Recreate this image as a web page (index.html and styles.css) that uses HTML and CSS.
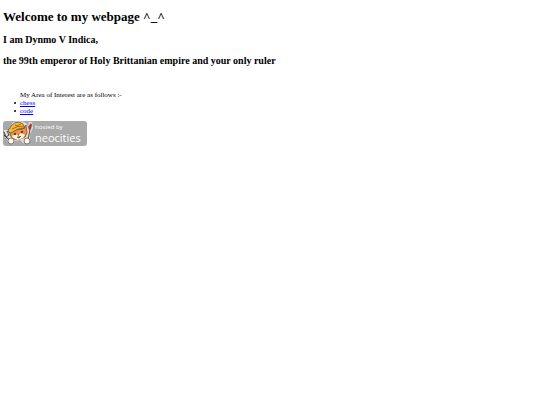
FILE: index.html
```html
<!DOCTYPE html>
<html lang="en">
<head>
<meta charset="utf-8">
<title>Welcome to my webpage</title>
<link rel="stylesheet" href="styles.css">
</head>
<body>
<h1>Welcome to my webpage ^_^</h1>
<h2>I am Dynmo V Indica,</h2>
<h2>the 99th emperor of Holy Brittanian empire and your only ruler</h2>
<section class="interests">
<p>My Area of Interest are as follows :-</p>
<ul>
<li><a href="#chess">chess</a></li>
<li><a href="#code">code</a></li>
</ul>
</section>
<a class="host" href="#neocities" aria-label="Hosted by Neocities">
<svg class="mascot" viewBox="0 0 32 26" aria-hidden="true">
<path class="halo" d="M1 9h4l2 2V6l3-5 7-1 6 2 2 4 1-5h3l1 6-3 6v7l-3 3-4-1-3-3-5 1-2 3H6l-2-4 1-2-4-4z"/>
<path class="fur line" d="M7 8v6l3 4q6 2 12-2l2-4-1-8-3 4-12 1z"/>
<path class="face" d="M9 15l4-2 2 2 3-3 4 2-2 3-5 2-5-2z"/>
<path class="hat line" d="M5 9q2-1 3-4 3-4 8-4 5 1 6 6l-7 1-7 4q-3 0-3-3z"/>
<path class="fold" d="M9 8q6-4 12-2M12 4l2 1 4-2"/>
<circle cx="12" cy="13" r="1"/><circle cx="19" cy="11" r="1"/>
<path class="line" d="M14 16l2 1 2-2M15 14h1"/>
<path class="fork" d="M1 11l2 5 6 5M4 10l2 4-3 2-2-2"/>
<path class="brush" d="M27 8l-2 11"/>
<path class="tip" d="M28 2l1 2-1 4-2 1-1-3z"/>
<circle class="paw line" cx="8" cy="20" r="3"/>
<circle class="paw line" cx="24" cy="20" r="3"/>
</svg>
<span class="wordmark"><small>hosted by</small><span>neocities</span></span>
</a>
</body>
</html>
```
FILE: styles.css
```css
body {
  margin: 9px 3px;
  background: #fff;
  color: #000;
  font: 7px/8px "Liberation Serif", "Times New Roman", serif;
}

h1 {
  margin: 0 0 9px;
  font-size: 13px;
  line-height: 16px;
}

h2 {
  margin: 0 0 9px;
  font-size: 10px;
  line-height: 12px;
}

.interests {
  margin: 24px 0 6px;
  padding-left: 17px;
}

p, ul {
  margin: 0;
  padding: 0;
}

ul {
  list-style: none;
  line-height: 7px;
}

li {
  display: flex;
  align-items: center;
  height: 8px;
}

li::before {
  content: "";
  width: 2px;
  height: 2px;
  margin: 0 4px 0 -6px;
  border-radius: 50%;
  background: #000;
}

a {
  color: #00e;
}

.host {
  display: inline-flex;
  align-items: center;
  height: 25px;
  padding-right: 6px;
  border-radius: 3px;
  background: #a9a9a9;
  color: #fff;
  text-decoration: none;
}

.mascot {
  width: 32px;
  height: 26px;
  fill: #222;
}

.halo { fill: #ddd; }
.fur { fill: #ee9148; }
.face { fill: #fff2df; }
.hat { fill: #f5b83c; }
.paw { fill: #fff; }
.tip { fill: #a63b2f; }

.line {
  stroke: #5c4028;
  stroke-width: 0.7;
}

.fold, .fork, .brush {
  fill: none;
  stroke: #a56b18;
}

.fork { stroke: #444; }
.brush { stroke: #65452c; }

.wordmark {
  display: flex;
  flex-direction: column;
  font-family: "Open Sans", sans-serif;
  font-size: 11px;
  line-height: 14px;
}

.wordmark small {
  font-size: 6px;
  line-height: 8px;
}
```
